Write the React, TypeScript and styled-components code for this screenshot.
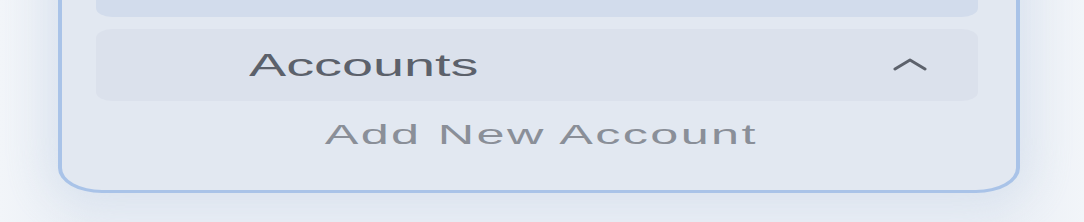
import React from 'react'
import styled, { createGlobalStyle } from 'styled-components'

const GlobalStyle = createGlobalStyle`
  html, body {
    margin: 0;
    padding: 0;
    background: #eef2f7;
    font-family: 'Liberation Sans', Arial, sans-serif;
    overflow: hidden;
  }
`

const Page = styled.div`
  width: 1084px;
  height: 222px;
  background: linear-gradient(90deg, #f2f5f9 0%, #e9eef5 8%, #e9eef5 92%, #f2f5f9 100%);
  overflow: hidden;
`

const Panel = styled.div`
  width: 962px;
  box-sizing: border-box;
  margin: -70px 0 0 58px;
  padding: 24px 38px 25px 34px;
  background: #e2e8f1;
  border: 3px solid #a9c3e8;
  border-left-width: 4px;
  border-right-width: 4px;
  border-radius: 44px / 25px;
  box-shadow: 0 0 40px 12px rgba(200, 212, 230, 0.45);
  display: flex;
  flex-direction: column;
`

const ActiveItem = styled.div`
  height: 60px;
  background: #d2dcec;
  border-radius: 16px / 9px;
`

const SectionHeader = styled.div`
  margin-top: 12px;
  height: 72px;
  background: #dbe1ec;
  border-radius: 16px / 9px;
  display: flex;
  align-items: center;
  justify-content: space-between;
  padding: 0 51px 0 153px;
`

const Label = styled.span<{ $size: number; $color: string; $spacing?: number; $origin?: string }>`
  display: inline-block;
  font-size: ${(p) => p.$size}px;
  letter-spacing: ${(p) => p.$spacing || 0}px;
  line-height: 1;
  color: ${(p) => p.$color};
  transform: scaleX(1.8);
  transform-origin: ${(p) => p.$origin || 'left center'};
  white-space: nowrap;
`

const Chevron = styled.svg`
  width: 34px;
  height: 14px;
  margin-top: -3px;
`

const AddRow = styled.div`
  height: 64px;
  box-sizing: border-box;
  padding: 3px 0 0 8px;
  display: flex;
  align-items: center;
  justify-content: center;
`

const App: React.FC = () => {
  return (
    <>
      <GlobalStyle />
      <Page>
        <Panel>
          <ActiveItem />
          <SectionHeader>
            <Label $size={31} $color="#5c616b">Accounts</Label>
            <Chevron viewBox="0 0 34 14">
              <polyline
                points="2,12 17,3 32,12"
                fill="none"
                stroke="#5d626c"
                strokeWidth="3"
                strokeLinecap="round"
                strokeLinejoin="round"
              />
            </Chevron>
          </SectionHeader>
          <AddRow>
            <Label $size={28} $color="#8a8f98" $spacing={1.3} $origin="center">
              Add New Account
            </Label>
          </AddRow>
        </Panel>
      </Page>
    </>
  )
}

export default App
